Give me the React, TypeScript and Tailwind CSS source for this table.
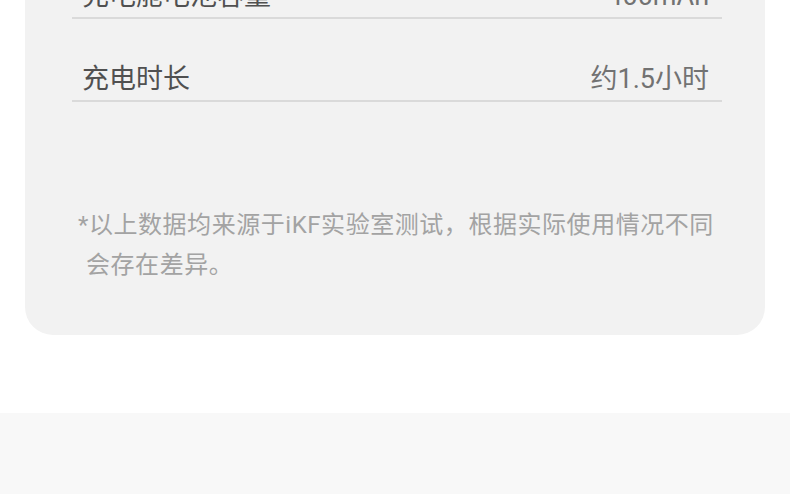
import React from "react";

const rows = [
  { label: "充电舱电池容量", value: "400mAh" },
  { label: "充电时长", value: "约1.5小时" },
];

export default function App() {
  return (
    <div
      className="h-[494px] w-[790px] overflow-hidden bg-white"
      style={{ fontFamily: "Roboto, 'Noto Sans CJK SC', sans-serif" }}
    >
      <div className="mx-[25px] mt-[-64px] rounded-b-[28px] bg-[#f2f2f2] pl-[47px] pr-[43px] pb-[50px]">
        {rows.map((r) => (
          <div
            key={r.label}
            className="flex h-[83px] items-end justify-between border-b-2 border-[#dadada] pb-[4px] pl-[10px] pr-[13px]"
          >
            <span className="text-[27px] leading-[34px] text-[#505050]">{r.label}</span>
            <span className="text-[27px] leading-[34px] text-[#727272]">{r.value}</span>
          </div>
        ))}
        <div className="mt-[103px] ml-[6px] text-[24px] leading-[40px] tracking-[0.55px] text-[#a3a3a3]">
          <div className="whitespace-nowrap">*以上数据均来源于iKF实验室测试，根据实际使用情况不同</div>
          <div className="pl-[8px] whitespace-nowrap">会存在差异。</div>
        </div>
      </div>
      <div className="mt-[78px] h-[200px] bg-[#f8f8f8]" />
    </div>
  );
}
